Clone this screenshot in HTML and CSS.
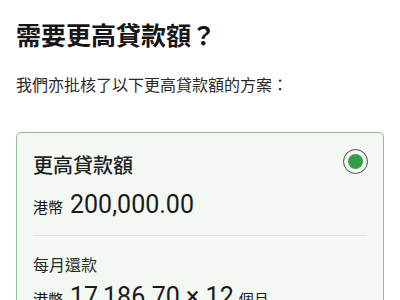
FILE: index.html
```html
<!DOCTYPE html>
<html lang="zh-Hant">
<head>
<meta charset="utf-8">
<link rel="stylesheet" href="styles.css">
</head>
<body>
<main class="page">
  <h1 class="title">需要更高貸款額？</h1>
  <p class="subtitle">我們亦批核了以下更高貸款額的方案：</p>
  <section class="card">
    <div class="card-head">
      <h2 class="card-title">更高貸款額</h2>
      <span class="radio"><span class="radio-dot"></span></span>
    </div>
    <div class="amount"><span class="cur">港幣</span><span class="num">200,000.00</span></div>
    <hr class="divider">
    <div class="label">每月還款</div>
    <div class="amount"><span class="cur">港幣</span><span class="num">17,186.70 × 12</span><span class="unit">個月</span></div>
  </section>
</main>
</body>
</html>
```
FILE: styles.css
```css
html, body {
  margin: 0;
  padding: 0;
  background: #ffffff;
}
body {
  font-family: Roboto, "Noto Sans CJK TC", sans-serif;
  color: #222;
}
.page {
  padding: 18px 16px 0;
}
.title {
  margin: 0;
  font-family: "Noto Sans CJK TC", sans-serif;
  font-size: 25px;
  line-height: 32px;
  font-weight: 700;
  color: #161616;
}
.subtitle {
  margin: 22px 0 0;
  font-family: "Noto Sans CJK TC", sans-serif;
  font-size: 16px;
  line-height: 24px;
  color: #2a2a2a;
}
.card {
  margin-top: 36px;
  border: 1px solid #8dc292;
  border-radius: 5px;
  background: #f3f8f3;
  padding: 16px 16px 16px;
}
.card-head {
  display: flex;
  justify-content: space-between;
  align-items: flex-start;
}
.card-title {
  margin: 2px 0 0;
  font-family: "Noto Sans CJK TC", sans-serif;
  font-size: 20px;
  line-height: 28px;
  font-weight: 500;
  color: #1e1e1e;
}
.radio {
  width: 25px;
  height: 25px;
  box-sizing: border-box;
  border: 1.5px solid #4a4a4a;
  border-radius: 50%;
  display: flex;
  align-items: center;
  justify-content: center;
  margin-right: -1px;
}
.radio-dot {
  width: 15px;
  height: 15px;
  border-radius: 50%;
  background: #33a048;
}
.amount {
  margin-top: 9px;
  line-height: 34px;
  color: #1a1a1a;
}
.cur {
  font-family: "Noto Sans CJK TC", sans-serif;
  font-size: 15px;
  margin-right: 7px;
  color: #111;
}
.num {
  font-family: Roboto, sans-serif;
  font-size: 25px;
}
.unit {
  font-family: "Noto Sans CJK TC", sans-serif;
  font-size: 15px;
  margin-left: 5px;
}
.divider {
  margin: 10px 0 0;
  border: 0;
  border-top: 1px solid #dde3dd;
  height: 0;
}
.label {
  margin-top: 16px;
  font-family: "Noto Sans CJK TC", sans-serif;
  font-size: 16px;
  line-height: 24px;
  color: #2a2a2a;
}
.label + .amount {
  margin-top: 4px;
}
```
